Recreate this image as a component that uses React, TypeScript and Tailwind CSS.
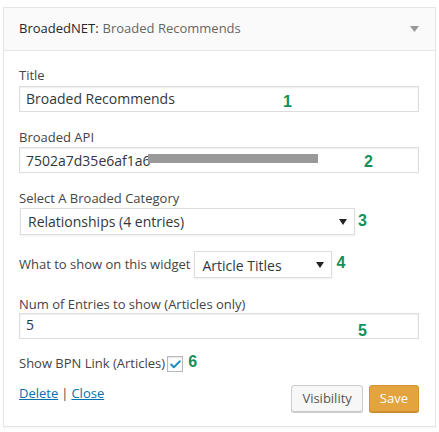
import { Check } from "lucide-react";

const Num = ({ n, className = "" }: { n: string; className?: string }) => (
  <span className={`font-bold text-[16px] leading-none text-[#12915a] ${className}`} style={{ fontFamily: '"Liberation Sans", Arial, sans-serif' }}>
    {n}
  </span>
);

const Arrow = () => (
  <svg width="8" height="6" viewBox="0 0 8 6" className="shrink-0">
    <path d="M0 0 L8 0 L4 6 Z" fill="#222" />
  </svg>
);

export default function App() {
  return (
    <div className="w-[439px] h-[432px] bg-white pt-[7px] px-[3px] text-[13px] text-[#444]" style={{ fontFamily: '"Open Sans", sans-serif' }}>
      <div className="border border-[#e5e5e5] bg-white shadow-[0_1px_1px_rgba(0,0,0,0.04)]">
        {/* Header */}
        <div className="h-[43px] bg-[#fafafa] border-b border-[#e5e5e5] flex items-center pl-[15px] pr-[16px]">
          <span className="text-[#23282d]">BroadedNET:</span>
          <span className="ml-[4px] text-[#666]">Broaded Recommends</span>
          <span className="ml-auto">
            <svg width="9" height="6" viewBox="0 0 9 6">
              <path d="M0 0 L9 0 L4.5 6 Z" fill="#999" />
            </svg>
          </span>
        </div>

        <div className="pl-[15px] pr-[16px] pt-[15px] pb-[14px]">
          {/* Title */}
          <div className="leading-[18px]">Title</div>
          <div className="mt-[2px] h-[26px] border border-[#ddd] shadow-[inset_0_1px_2px_rgba(0,0,0,0.07)] flex items-center pl-[6px] text-[14px] text-[#32373c] relative">
            <span className="-mt-[2px]">Broaded Recommends</span>
            <Num n="1" className="absolute left-[263px] top-[7px]" />
          </div>

          {/* API */}
          <div className="mt-[16px] leading-[18px]">Broaded API</div>
          <div className="mt-[1px] h-[26px] border border-[#ddd] shadow-[inset_0_1px_2px_rgba(0,0,0,0.07)] flex items-center pl-[6px] text-[14px] text-[#32373c] relative">
            <span>7502a7d35e6af1a6</span>
            <span className="absolute left-[128px] top-[6px] w-[170px] h-[9px] bg-[#999]" />
            <Num n="2" className="absolute left-[344px] top-[6px]" />
          </div>

          {/* Category */}
          <div className="mt-[16px] leading-[18px]">Select A Broaded Category</div>
          <div className="mt-[1px] flex items-center">
            <div className="w-[335px] ml-[1px] h-[27px] border border-[#ddd] shadow-[0_1px_2px_rgba(0,0,0,0.07)] flex items-center pl-[7px] pr-[7px] text-[14px] text-[#32373c]">
              <span>Relationships (4 entries)</span>
              <span className="ml-auto"><Arrow /></span>
            </div>
            <Num n="3" className="ml-[3px] -mt-[2px]" />
          </div>

          {/* What to show */}
          <div className="mt-[16px] flex items-center">
            <span>What to show on this widget</span>
            <div className="ml-[4px] w-[138px] h-[27px] border border-[#ddd] shadow-[0_1px_2px_rgba(0,0,0,0.07)] flex items-center pl-[7px] pr-[7px] text-[14px] text-[#32373c]">
              <span className="mt-[2px]">Article Titles</span>
              <span className="ml-auto"><Arrow /></span>
            </div>
            <Num n="4" className="ml-[4px] -mt-[4px]" />
          </div>

          {/* Num entries */}
          <div className="mt-[17px] leading-[18px]">Num of Entries to show (Articles only)</div>
          <div className="h-[26px] border border-[#ddd] shadow-[inset_0_1px_2px_rgba(0,0,0,0.07)] flex items-center pl-[6px] text-[14px] text-[#32373c] relative">
            <span className="-mt-[3px]">5</span>
            <Num n="5" className="absolute left-[338px] top-[9px]" />
          </div>

          {/* Checkbox */}
          <div className="mt-[17px] h-[16px] flex items-center">
            <span>Show BPN Link (Articles)</span>
            <span className="ml-[2px] w-[16px] h-[16px] border border-[#b4b9be] bg-white shadow-[inset_0_1px_2px_rgba(0,0,0,0.1)] flex items-center justify-center">
              <Check size={13} strokeWidth={3.5} color="#1e8cbe" />
            </span>
            <Num n="6" className="ml-[5px] -mt-[5px]" />
          </div>

          {/* Footer */}
          <div className="mt-[13px] flex items-start">
            <div className="-mt-[1px]">
              <a className="text-[#0073aa] underline">Delete</a>
              <span className="mx-[3px] text-[#444]">|</span>
              <a className="text-[#0073aa] underline">Close</a>
            </div>
            <div className="ml-auto flex gap-[6px]">
              <button className="h-[27px] px-[10px] border border-[#ccc] rounded-[3px] bg-[#f7f7f7] text-[#555] shadow-[0_1px_0_#ccc] text-[13px]">
                Visibility
              </button>
              <button className="h-[27px] px-[10px] border border-[#d19431] rounded-[3px] bg-[#e3a33e] text-white shadow-[0_1px_0_#c48a2d] text-[13px]">
                Save
              </button>
            </div>
          </div>
        </div>
      </div>
    </div>
  );
}
